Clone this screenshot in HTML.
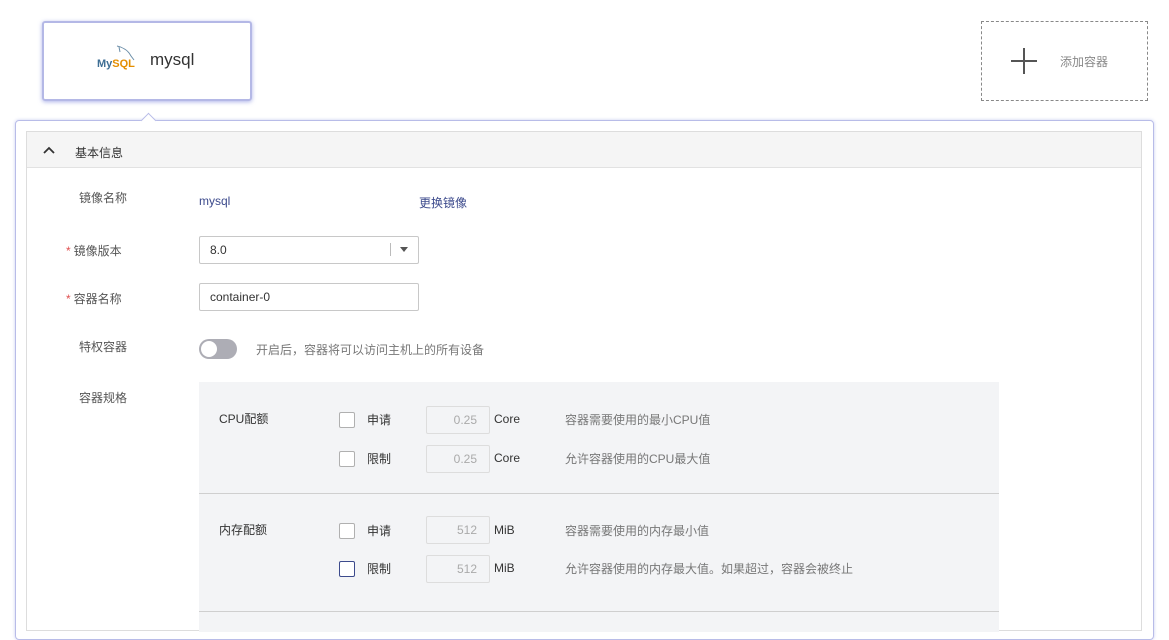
<!DOCTYPE html>
<html><head><meta charset="utf-8"><style>
*{box-sizing:border-box;margin:0;padding:0}
body{width:1169px;height:625px;overflow:hidden;background:#fff;font-family:"Liberation Sans","Noto Sans CJK SC",sans-serif;font-size:12px;color:#333;position:relative}
.a{position:absolute}
.lbl{position:absolute;color:#555;font-size:12px}
.star{color:#e05050;margin-right:3px}
.inp{position:absolute;border:1px solid #c8c8c8;border-radius:2px;height:28px;line-height:26px;padding-left:10px;background:#fff;font-size:12px;color:#333}
.cb{position:absolute;width:16px;height:16px;border:1px solid #b0b0b0;border-radius:2px;background:#fff}
.num{position:absolute;width:64px;height:28px;border:1px solid #ddd;border-radius:2px;background:#f3f4f6;color:#aaa;text-align:right;padding-right:12px;line-height:26px}
.g{color:#777}
</style></head><body>
<div class="a" style="left:42px;top:21px;width:210px;height:80px;border:2px solid #b4b8e6;border-radius:3px;box-shadow:0 1px 4px rgba(120,130,220,.6)"></div>
<div class="a" style="left:97px;top:58px;font-size:11px;font-weight:bold;color:#3e6e94">My<span style="color:#e48e00">SQL</span></div>
<svg class="a" style="left:114px;top:44px" width="22" height="18"><path d="M3 2 C8 3 14 6 17 12 L20 16 M5 3 L6 8" stroke="#6b8ea8" fill="none" stroke-width="1"/></svg>
<div class="a" style="left:150px;top:50px;font-size:17px;color:#333">mysql</div>
<div class="a" style="left:981px;top:21px;width:167px;height:80px;border:1px dashed #888"></div>
<div class="a" style="left:1011px;top:60px;width:26px;height:2px;background:#555"></div>
<div class="a" style="left:1023px;top:48px;width:2px;height:26px;background:#555"></div>
<div class="a" style="left:1060px;top:53px;color:#888;font-size:12px">添加容器</div>
<div class="a" style="left:15px;top:120px;width:1139px;height:520px;border:1px solid #b8bce8;border-radius:4px;box-shadow:0 0 3px rgba(120,130,220,.4)"></div>
<div class="a" style="left:143px;top:115px;width:11px;height:11px;background:#fff;border-left:1px solid #b8bce8;border-top:1px solid #b8bce8;transform:rotate(45deg)"></div>
<div class="a" style="left:26px;top:131px;width:1116px;height:500px;border:1px solid #ddd"></div>
<div class="a" style="left:27px;top:132px;width:1114px;height:36px;background:#f5f5f5;border-bottom:1px solid #e2e2e2"></div>
<svg class="a" style="left:42px;top:145px" width="14" height="10"><path d="M2 8 L7 3 L12 8" stroke="#333" stroke-width="1.8" fill="none"/></svg>
<div class="a" style="left:75px;top:144px;font-size:12px">基本信息</div>
<div class="lbl" style="left:79px;top:189px">镜像名称</div>
<div class="a" style="left:199px;top:194px;color:#3c4a8c">mysql</div>
<div class="a" style="left:419px;top:194px;color:#3c4a8c">更换镜像</div>
<div class="lbl" style="left:66px;top:242px"><span class="star">*</span>镜像版本</div>
<div class="inp" style="left:199px;top:236px;width:220px">8.0</div>
<div class="a" style="left:390px;top:243px;width:1px;height:13px;background:#bbb"></div>
<div class="a" style="left:400px;top:247px;border:4px solid transparent;border-top:5px solid #555"></div>
<div class="lbl" style="left:66px;top:290px"><span class="star">*</span>容器名称</div>
<div class="inp" style="left:199px;top:283px;width:220px">container-0</div>
<div class="lbl" style="left:79px;top:338px">特权容器</div>
<div class="a" style="left:199px;top:339px;width:38px;height:20px;border-radius:10px;background:#adadb5"></div>
<div class="a" style="left:201px;top:341px;width:16px;height:16px;border-radius:8px;background:#fff"></div>
<div class="a g" style="left:256px;top:341px">开启后，容器将可以访问主机上的所有设备</div>
<div class="lbl" style="left:79px;top:389px">容器规格</div>
<div class="a" style="left:199px;top:382px;width:800px;height:250px;background:#f3f4f6"></div>
<div class="a" style="left:199px;top:493px;width:800px;height:1px;background:#cfcfcf"></div>
<div class="a" style="left:199px;top:611px;width:800px;height:1px;background:#cfcfcf"></div>
<div class="a" style="left:219px;top:410px">CPU配额</div>
<div class="cb" style="left:339px;top:412px"></div><div class="a" style="left:367px;top:411px">申请</div>
<div class="num" style="left:426px;top:406px">0.25</div><div class="a" style="left:494px;top:412px">Core</div>
<div class="a g" style="left:565px;top:411px">容器需要使用的最小CPU值</div>
<div class="cb" style="left:339px;top:451px"></div><div class="a" style="left:367px;top:450px">限制</div>
<div class="num" style="left:426px;top:445px">0.25</div><div class="a" style="left:494px;top:451px">Core</div>
<div class="a g" style="left:565px;top:450px">允许容器使用的CPU最大值</div>
<div class="a" style="left:219px;top:521px">内存配额</div>
<div class="cb" style="left:339px;top:523px"></div><div class="a" style="left:367px;top:522px">申请</div>
<div class="num" style="left:426px;top:516px">512</div><div class="a" style="left:494px;top:523px">MiB</div>
<div class="a g" style="left:565px;top:522px">容器需要使用的内存最小值</div>
<div class="cb" style="left:339px;top:561px;border-color:#3c4a8c"></div><div class="a" style="left:367px;top:560px">限制</div>
<div class="num" style="left:426px;top:555px">512</div><div class="a" style="left:494px;top:561px">MiB</div>
<div class="a g" style="left:565px;top:560px">允许容器使用的内存最大值。如果超过，容器会被终止</div>
</body></html>
